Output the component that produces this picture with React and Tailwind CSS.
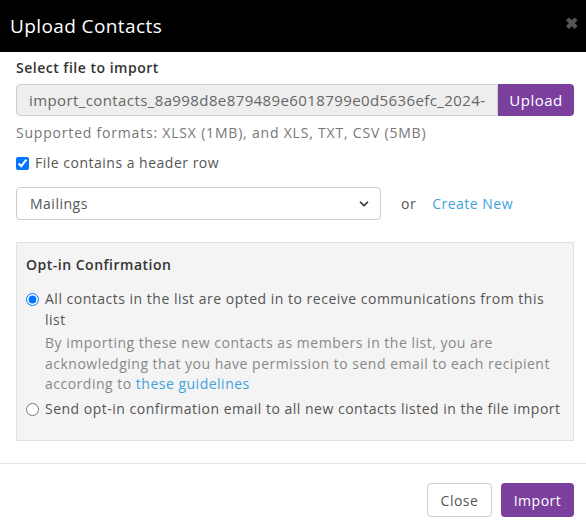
import { ChevronDown } from 'lucide-react';

export default function App() {
    return (
        <div className="w-[586px] h-[527px] bg-white text-[14px] tracking-[0.5px] text-[#555] overflow-hidden" style={{ fontFamily: '"Open Sans", "Noto Sans", sans-serif' }}>
            {/* Header */}
            <div className="h-[52px] bg-black flex items-center justify-between pl-[10px] pr-[8px]">
                <h1 className="text-[19px] text-white font-medium tracking-[0.4px]">Upload Contacts</h1>
                <span className="text-[#555] text-[16px] font-bold leading-none mb-[6px]">✖</span>
            </div>

            {/* Body */}
            <div className="pl-[16px] pr-[12px] pt-[6px]">
                <p className="font-semibold text-[#333] leading-[20px]">Select file to import</p>
                <div className="flex mt-[6px] h-[32px]">
                    <div className="flex-1 min-w-0 bg-[#eeeeee] border border-[#cfcfcf] rounded-l-[4px] flex items-center pl-[12px] pr-[11px]">
                        <div className="overflow-hidden">
                            <span className="whitespace-nowrap text-[15px] text-[#666] tracking-[0.4px]">import_contacts_8a998d8e879489e6018799e0d5636efc_2024-05-17.xlsx</span>
                        </div>
                    </div>
                    <button className="w-[76px] bg-[#7b3f9e] text-white text-[15px] rounded-r-[4px]">Upload</button>
                </div>
                <p className="mt-[7px] text-[#777] leading-[20px] tracking-[0.8px]">Supported formats: XLSX (1MB), and XLS, TXT, CSV (5MB)</p>

                <label className="mt-[10px] flex items-center gap-[6px] leading-[20px] text-[#555]">
                    <input type="checkbox" defaultChecked className="w-[13px] h-[13px] m-0" />
                    File contains a header row
                </label>

                <div className="mt-[14px] flex items-center">
                    <div className="w-[365px] h-[33px] border border-[#ccc] rounded-[4px] flex items-center justify-between pl-[13px] pr-[9px] text-[#555]">
                        <span>Mailings</span>
                        <ChevronDown className="w-[14px] h-[14px] text-[#333]" strokeWidth={3} />
                    </div>
                    <span className="ml-[20px] text-[#555]">or</span>
                    <span className="ml-[16px] text-[#3fa3dd]">Create New</span>
                </div>

                {/* Opt-in panel */}
                <div className="mt-[22px] h-[199px] bg-[#f4f4f4] border border-[#e0e0e0] pl-[9px] pr-[12px] pt-[12px]">
                    <p className="font-semibold text-[#333] leading-[20px]">Opt-in Confirmation</p>
                    <div className="mt-[14px] flex gap-[6px]">
                        <input type="radio" name="optin" defaultChecked className="w-[13px] h-[13px] mt-[4px] shrink-0 m-0" />
                        <div className="leading-[20.5px] max-w-[515px]">
                            <p className="text-[#555]">All contacts in the list are opted in to receive communications from this list</p>
                            <p className="mt-[3px] text-[#888]">
                                By importing these new contacts as members in the list, you are acknowledging that you have permission to send email to each recipient according to <span className="text-[#3fa3dd]">these guidelines</span>
                            </p>
                        </div>
                    </div>
                    <div className="mt-[4px] flex gap-[6px] leading-[20px]">
                        <input type="radio" name="optin" className="w-[13px] h-[13px] mt-[4px] shrink-0 m-0" />
                        <p className="text-[#555] whitespace-nowrap tracking-[0.5px]">Send opt-in confirmation email to all new contacts listed in the file import</p>
                    </div>
                </div>
            </div>

            {/* Footer */}
            <div className="mt-[22px] border-t border-[#e5e5e5] flex justify-end gap-[9px] pt-[19px] pr-[12px]">
                <button className="w-[65px] h-[34px] border border-[#ccc] rounded-[4px] text-[#555] bg-white">Close</button>
                <button className="w-[73px] h-[34px] rounded-[4px] text-white bg-[#7b3f9e]">Import</button>
            </div>
        </div>
    );
}
